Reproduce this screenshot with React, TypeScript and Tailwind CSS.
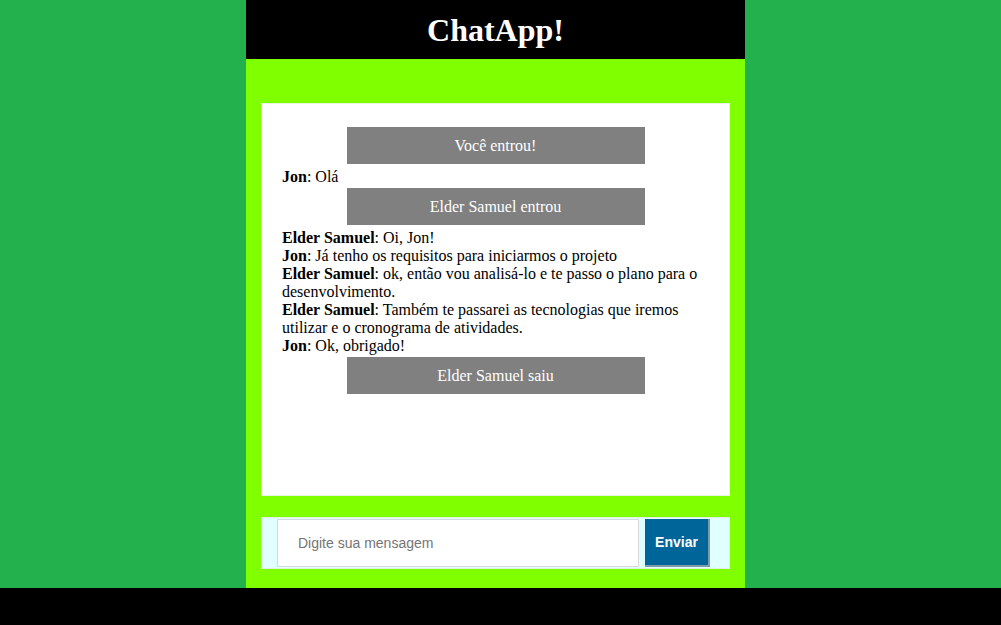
const messages: Array<{ kind: 'system'; text: string } | { kind: 'user'; user: string; text: string }> = [
  { kind: 'system', text: 'Você entrou!' },
  { kind: 'user', user: 'Jon', text: 'Olá' },
  { kind: 'system', text: 'Elder Samuel entrou' },
  { kind: 'user', user: 'Elder Samuel', text: 'Oi, Jon!' },
  { kind: 'user', user: 'Jon', text: 'Já tenho os requisitos para iniciarmos o projeto' },
  { kind: 'user', user: 'Elder Samuel', text: 'ok, então vou analisá-lo e te passo o plano para o desenvolvimento.' },
  { kind: 'user', user: 'Elder Samuel', text: 'Também te passarei as tecnologias que iremos utilizar e o cronograma de atividades.' },
  { kind: 'user', user: 'Jon', text: 'Ok, obrigado!' },
  { kind: 'system', text: 'Elder Samuel saiu' },
];

export default function App() {
  return (
    <div className="flex min-h-[625px] flex-col bg-black font-['Liberation_Serif',serif]">
      <div className="flex h-[588px] bg-[#22b14c]">
        <div className="ml-[246px] flex w-[499px] flex-col bg-[#80ff00]">
          <header className="flex h-[59px] items-center justify-center bg-black">
            <h1 className="text-[32px] font-bold leading-none text-white">ChatApp!</h1>
          </header>
          <main className="mx-[15px] mt-[44px] h-[393px] border border-[#e6f5e0] bg-white px-[20px] pt-[21px] text-[16px] leading-[18px] text-black">
            {messages.map((m, i) =>
              m.kind === 'system' ? (
                <div
                  key={i}
                  className="mx-auto mt-[2px] mb-[4px] flex h-[37px] w-[298px] items-center justify-center bg-[#808080] text-white"
                >
                  {m.text}
                </div>
              ) : (
                <p key={i}>
                  <b>{m.user}</b>: {m.text}
                </p>
              ),
            )}
          </main>
          <form className="mx-[15px] mt-[21px] flex h-[52px] items-center gap-[6px] border border-[#e0f0e0] bg-[#e0ffff] pl-[15px] pr-[18px]">
            <input
              className="h-[48px] w-[362px] border border-[#d8d8d8] bg-white px-[20px] font-['Liberation_Sans',Arial,sans-serif] text-[14px] text-gray-700 outline-none placeholder:text-[#757575]"
              placeholder="Digite sua mensagem"
            />
            <button
              type="button"
              className="h-[48px] w-[65px] border-r-2 border-b-2 border-[#7f9aa8] bg-[#00669a] font-['Liberation_Sans',Arial,sans-serif] text-[14px] font-bold text-white"
            >
              Enviar
            </button>
          </form>
        </div>
      </div>
      <div className="h-[37px] bg-black" />
    </div>
  );
}
